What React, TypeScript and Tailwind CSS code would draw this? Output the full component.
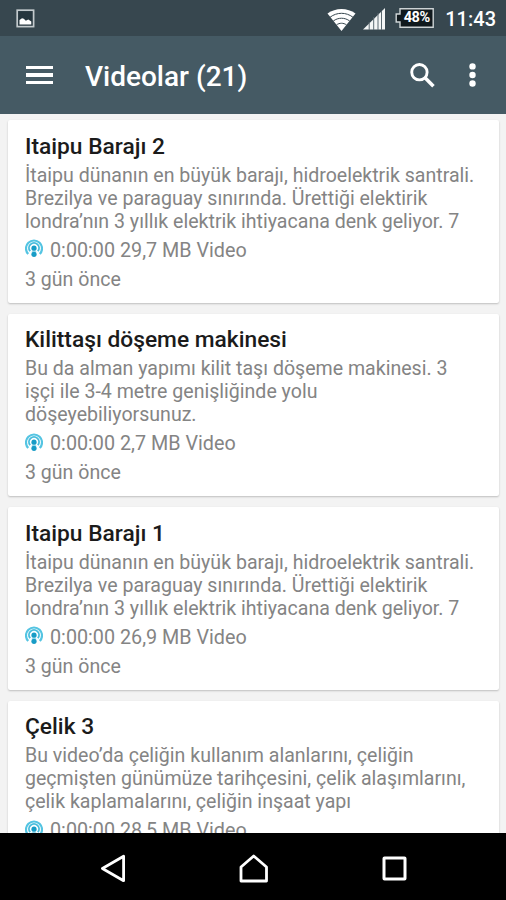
type Video = {
  title: string
  lines: string[]
  meta: string
  date: string
}

const videos: Video[] = [
  {
    title: 'Itaipu Barajı 2',
    lines: [
      'İtaipu dünanın en büyük barajı, hidroelektrik santrali.',
      'Brezilya ve paraguay sınırında. Ürettiği elektirik',
      'londra’nın 3 yıllık elektrik ihtiyacana denk geliyor. 7',
    ],
    meta: '0:00:00 29,7 MB Video',
    date: '3 gün önce',
  },
  {
    title: 'Kilittaşı döşeme makinesi',
    lines: [
      'Bu da alman yapımı kilit taşı döşeme makinesi. 3',
      'işçi ile 3-4 metre genişliğinde yolu',
      'döşeyebiliyorsunuz.',
    ],
    meta: '0:00:00 2,7 MB Video',
    date: '3 gün önce',
  },
  {
    title: 'Itaipu Barajı 1',
    lines: [
      'İtaipu dünanın en büyük barajı, hidroelektrik santrali.',
      'Brezilya ve paraguay sınırında. Ürettiği elektirik',
      'londra’nın 3 yıllık elektrik ihtiyacana denk geliyor. 7',
    ],
    meta: '0:00:00 26,9 MB Video',
    date: '3 gün önce',
  },
  {
    title: 'Çelik 3',
    lines: [
      'Bu video’da çeliğin kullanım alanlarını, çeliğin',
      'geçmişten günümüze tarihçesini, çelik alaşımlarını,',
      'çelik kaplamalarını, çeliğin inşaat yapı',
    ],
    meta: '0:00:00 28,5 MB Video',
    date: '3 gün önce',
  },
]

function StatusBar() {
  return (
    <div className="flex h-9 shrink-0 items-center bg-[#37474f] pl-4 pr-2.5 text-white">
      <svg width="19" height="19" viewBox="0 0 19 19">
        <rect x="1.2" y="1.2" width="16.4" height="16.4" fill="#26363e" stroke="#c3cacd" strokeWidth="1.7" />
        <path d="M3.5 15.5V11l2.5-1.8 1.8.6 2 2 2.5-1.2 3 2v2.9z" fill="#fff" />
      </svg>
      <svg className="ml-auto mt-1" width="29" height="24" viewBox="0 0 29 24">
        <path d="M.5 5.5C8.5-.6 20.5-.6 28.5 5.5L14.5 23z" fill="#fff" />
        <g fill="none" stroke="#37474f" strokeWidth="1">
          <path d="M3.1 9.2c6.8-5.2 16-5.2 22.8 0" />
          <path d="M6.3 13c4.9-3.7 11.5-3.7 16.4 0" />
          <path d="M9.5 16.9c3-2.2 7-2.2 10 0" />
        </g>
      </svg>
      <svg className="ml-[7px] mt-0.5" width="22" height="22" viewBox="0 0 22 22">
        <path d="M0 21.5 22 0v21.5z" fill="#f4f6f6" />
        <g stroke="#5b6970" strokeWidth="1">
          <path d="M6.2 14v8M10.7 9v13M15 5v17M18.5 3v20" />
        </g>
      </svg>
      <div className="relative ml-2.5 h-5 w-[39px]">
        <svg className="absolute inset-0" width="39" height="20" viewBox="0 0 39 20">
          <path d="M5 .8h33.2v18.4H5V14H1.2V6H5z" fill="#10191d" stroke="#cdd3d5" strokeWidth="1.4" />
        </svg>
        <span className="absolute inset-0 pl-[4px] text-center text-[14.5px] font-bold leading-5 tracking-[-0.4px]">
          48%
        </span>
      </div>
      <span className="ml-[11px] pt-0.5 text-[20px] font-medium leading-9">11:43</span>
    </div>
  )
}

function Toolbar() {
  return (
    <div className="flex h-[78px] shrink-0 items-center bg-[#455a64] pl-[26px] pr-[30px] text-white">
      <div className="flex flex-col gap-1">
        <span className="h-[3.5px] w-[27px] bg-white" />
        <span className="h-[3.5px] w-[27px] bg-white" />
        <span className="h-[3.5px] w-[27px] bg-white" />
      </div>
      <h1 className="ml-8 pt-[3px] text-[28px] font-medium leading-8">Videolar (21)</h1>
      <svg className="ml-auto" width="25" height="25" viewBox="0 0 26 26" fill="none" stroke="#fff">
        <circle cx="9.8" cy="9.6" r="8" strokeWidth="3" />
        <path d="m15.6 15.4 8.8 8.8" strokeWidth="3.7" />
      </svg>
      <svg className="ml-[34px]" width="7" height="24" viewBox="0 0 7 24" fill="#fff">
        <circle cx="3.5" cy="3.4" r="3.2" />
        <circle cx="3.5" cy="12" r="3.2" />
        <circle cx="3.5" cy="20.5" r="3.2" />
      </svg>
    </div>
  )
}

function PodcastIcon() {
  return (
    <svg className="-mt-1" width="18" height="18" viewBox="0 0 18 18" fill="none" stroke="#2bb0d6">
      <path d="M3.2 15A8 8 0 1 1 14.8 15" stroke="#54c4e2" strokeWidth="2.2" />
      <path d="M5.2 12.2A5 5 0 1 1 12.8 12.2" stroke="#48bddd" strokeWidth="1.9" />
      <circle cx="9" cy="9.2" r="2.6" fill="#189cc6" stroke="none" />
      <path d="M6.8 12.2h4.4v1.6H6.8z" fill="#8fd8ec" stroke="none" />
      <circle cx="9" cy="15.3" r="2.6" fill="#189cc6" stroke="none" />
    </svg>
  )
}

function VideoCard({ video }: { video: Video }) {
  return (
    <div className="h-[182.5px] shrink-0 rounded-[2px] bg-white px-[17px] pt-[13.5px] shadow-[0_1px_2px_rgba(0,0,0,0.22)]">
      <h2 className="whitespace-nowrap text-[22.75px] font-medium leading-[26px] text-[#1b1b1b]">{video.title}</h2>
      <div className="mt-1 whitespace-nowrap text-[19.57px] leading-[23px] text-[#848484]">
        {video.lines.map((line) => (
          <p key={line}>{line}</p>
        ))}
      </div>
      <div className="mt-[3px] flex items-center gap-[7px] text-[19.75px] leading-[29px] text-[#848484]">
        <PodcastIcon />
        <span>{video.meta}</span>
      </div>
      <p className="text-[19.57px] leading-[29.5px] text-[#848484]">{video.date}</p>
    </div>
  )
}

function NavBar() {
  return (
    <div className="flex h-[67px] shrink-0 items-center bg-black pl-[100px] pt-1">
      <svg width="27" height="29" viewBox="0 0 27 29" fill="none" stroke="#fff" strokeWidth="2.8">
        <path d="M2.4 14.5 23.6 2.3v24.4z" strokeLinejoin="round" />
      </svg>
      <svg className="ml-28" width="30" height="29" viewBox="0 0 30 29" fill="none" stroke="#fff" strokeWidth="2.8">
        <path d="M2 27V13L14.7 2 27.5 13v14z" strokeLinejoin="round" />
      </svg>
      <svg className="ml-[113px]" width="25" height="25" viewBox="0 0 25 25" fill="none" stroke="#fff" strokeWidth="3">
        <rect x="2" y="2" width="21" height="21" rx="0.5" />
      </svg>
    </div>
  )
}

export default function App() {
  return (
    <div className="flex h-[900px] w-[506px] flex-col overflow-hidden bg-[#f3f3f3] font-['Roboto',sans-serif]">
      <StatusBar />
      <Toolbar />
      <div className="flex min-h-0 flex-1 flex-col gap-[11px] overflow-hidden pl-2 pr-[7px] pt-1.5">
        {videos.map((video) => (
          <VideoCard key={video.title} video={video} />
        ))}
      </div>
      <NavBar />
    </div>
  )
}
